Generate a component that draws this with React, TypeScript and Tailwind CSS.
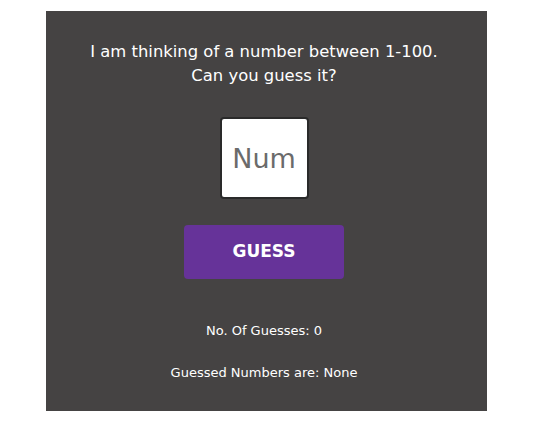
export default function App() {
  const font = { fontFamily: '"Comic Sans MS", "DejaVu Sans", sans-serif' };
  return (
    <div className="w-[535px] h-[439px] bg-white pt-[11px] pl-[46px]" style={font}>
      <div className="w-[441px] h-[400px] bg-[#454343] flex flex-col items-center text-white pr-[5px]">
        <div className="mt-[29px] text-[16.4px] leading-[24px] text-center">
          <div>I am thinking of a number between 1-100.</div>
          <div>Can you guess it?</div>
        </div>
        <input
          placeholder="Num"
          className="mt-[29px] w-[89px] h-[82px] bg-white border-2 border-[#2a2a2a] rounded-[4px] text-center text-[27px] text-black placeholder:text-[#6b6b6b] outline-none"
          style={font}
        />
        <button className="mt-[26px] w-[160px] h-[54px] bg-[#663399] rounded-[4px] text-white font-bold text-[17px]" style={font}>
          GUESS
        </button>
        <div className="mt-[42px] text-[13px] leading-[20px]">No. Of Guesses: 0</div>
        <div className="mt-[22px] text-[13px] leading-[20px]">Guessed Numbers are: None</div>
      </div>
    </div>
  );
}
